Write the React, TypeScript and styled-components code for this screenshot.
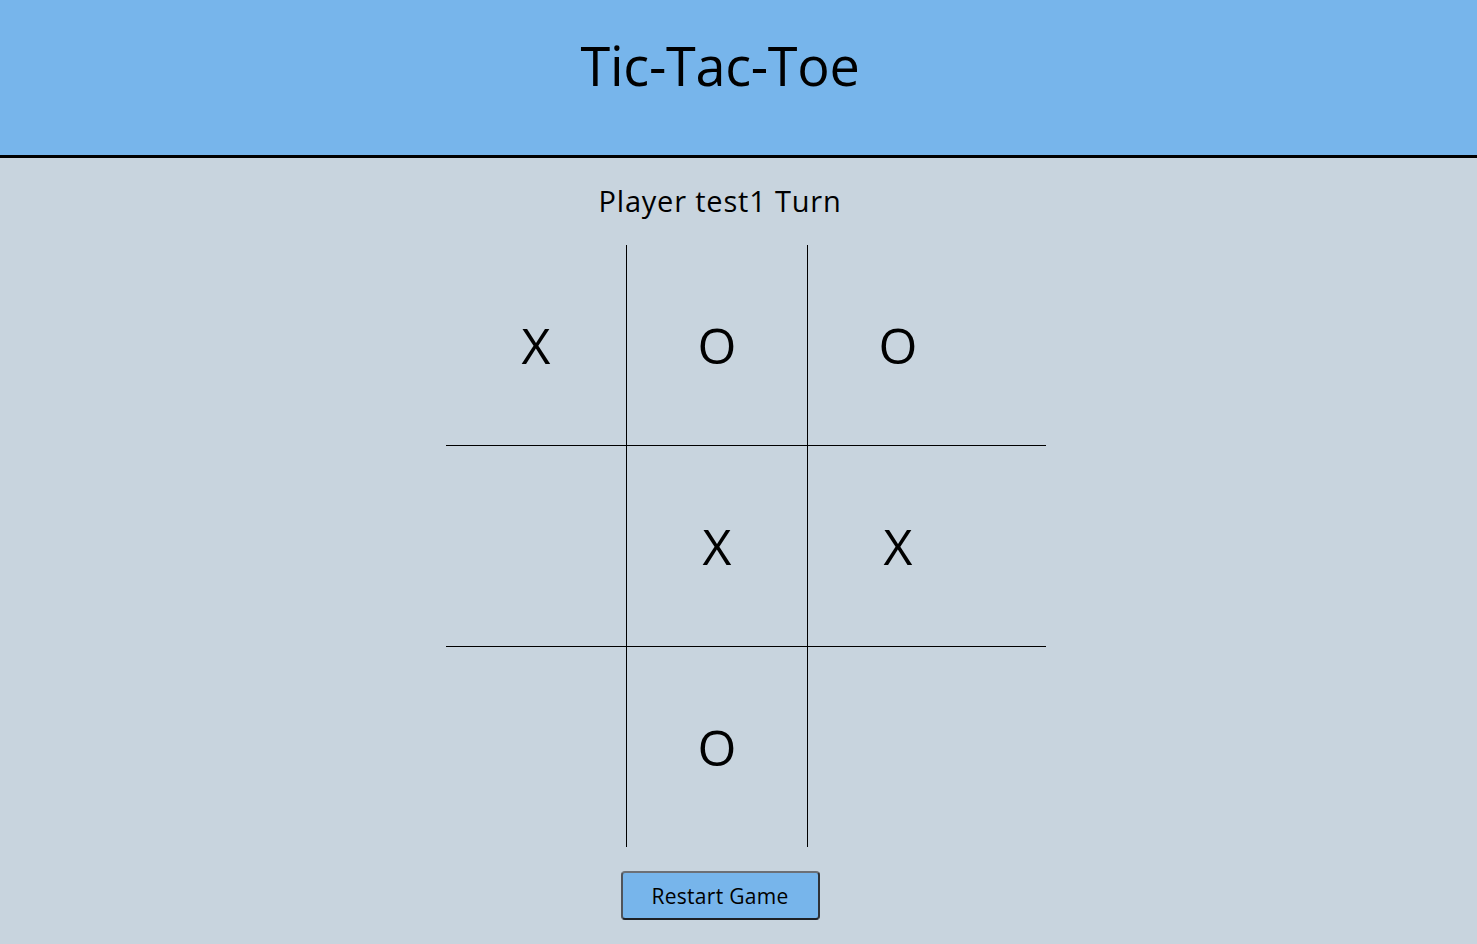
import styled, { createGlobalStyle } from 'styled-components';

const GlobalStyle = createGlobalStyle`
    html, body {
        margin: 0;
        padding: 0;
        background: #c8d4de;
        font-family: "Open Sans", "Liberation Sans", sans-serif;
        color: #000;
    }
`

const Page = styled('div')`
    min-height: 944px;
    display: flex;
    flex-direction: column;
`

const Header = styled('header')`
    height: 155px;
    background: #77b5eb;
    border-bottom: 3px solid #000;
    width: 100%;
`

const HeaderInner = styled('div')`
    width: 1440px;
    text-align: center;
`

const Title = styled('h1')`
    margin: 28px 0 0;
    font-size: 54px;
    font-weight: 500;
    line-height: 74px;
    letter-spacing: -0.3px;
`

const Main = styled('main')`
    width: 1440px;
    display: flex;
    flex-direction: column;
`

const TurnText = styled('p')`
    margin: 24px 0 0;
    text-align: center;
    font-size: 29px;
    line-height: 38px;
    letter-spacing: 0.8px;
`

const Board = styled('div')`
    width: 600px;
    margin: 25px 0 0 446px;
    display: flex;
    flex-direction: column;
`

const Row = styled('div')<{ $last?: boolean }>`
    display: flex;
    border-bottom: ${props => props.$last ? 'none' : '1px solid #000'};
`

const Cell = styled('div')<{ $last?: boolean }>`
    width: 180px;
    height: 200px;
    border-right: ${props => props.$last ? 'none' : '1px solid #000'};
    display: flex;
    align-items: center;
    justify-content: center;
    font-size: 50px;
    font-weight: 400;
    line-height: 1;
    cursor: pointer;
`

const Footer = styled('div')`
    display: flex;
    justify-content: center;
    padding-top: 24px;
`

const RestartButton = styled('button')`
    width: 199px;
    height: 49px;
    background: #77b5eb;
    border: 2px solid;
    border-color: #6c7076 #2e3237 #1e2125 #50545a;
    border-radius: 4px;
    font-family: inherit;
    font-size: 21px;
    letter-spacing: 0.3px;
    color: #000;
    cursor: pointer;
`

const board = [
    ['X', 'O', 'O'],
    ['', 'X', 'X'],
    ['', 'O', ''],
]

const App = () => {
    return (
        <Page>
            <GlobalStyle />
            <Header>
                <HeaderInner>
                    <Title>Tic-Tac-Toe</Title>
                </HeaderInner>
            </Header>
            <Main>
                <TurnText>Player test1 Turn</TurnText>
                <Board>
                    {board.map((row, r) => (
                        <Row key={r} $last={r === board.length - 1}>
                            {row.map((value, c) => (
                                <Cell key={c} $last={c === row.length - 1}>{value}</Cell>
                            ))}
                        </Row>
                    ))}
                </Board>
                <Footer>
                    <RestartButton>Restart Game</RestartButton>
                </Footer>
            </Main>
        </Page>
    );
};

export default App;
